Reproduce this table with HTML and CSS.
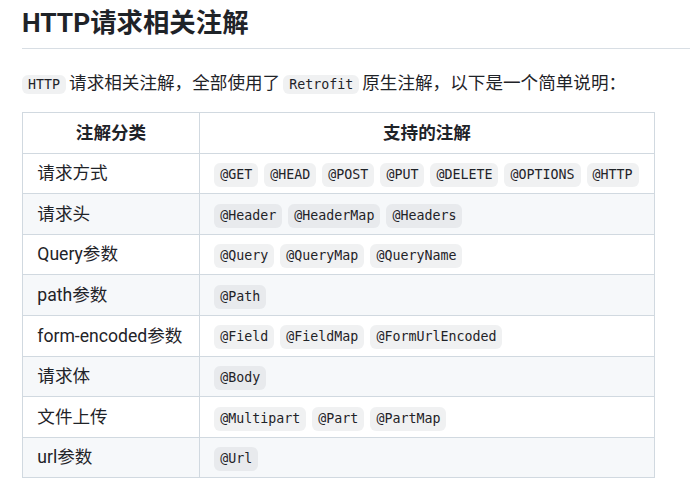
FILE: index.html
```html
<!DOCTYPE html>
<html lang="zh-CN">
<head>
<meta charset="utf-8">
<title>HTTP请求相关注解</title>
<link rel="stylesheet" href="styles.css">
</head>
<body>
<main class="doc">
  <h2 class="title">HTTP请求相关注解</h2>
  <p class="lead"><code class="chip">HTTP</code>请求相关注解，全部使用了<code class="chip">Retrofit</code>原生注解，以下是一个简单说明：</p>
  <table class="ann">
    <thead>
      <tr><th class="c1">注解分类</th><th class="c2">支持的注解</th></tr>
    </thead>
    <tbody>
      <tr><td>请求方式</td><td><div class="chips"><code class="chip">@GET</code><code class="chip">@HEAD</code><code class="chip">@POST</code><code class="chip">@PUT</code><code class="chip">@DELETE</code><code class="chip">@OPTIONS</code><code class="chip">@HTTP</code></div></td></tr>
      <tr><td>请求头</td><td><div class="chips"><code class="chip">@Header</code><code class="chip">@HeaderMap</code><code class="chip">@Headers</code></div></td></tr>
      <tr><td>Query参数</td><td><div class="chips"><code class="chip">@Query</code><code class="chip">@QueryMap</code><code class="chip">@QueryName</code></div></td></tr>
      <tr><td>path参数</td><td><div class="chips"><code class="chip">@Path</code></div></td></tr>
      <tr><td>form-encoded参数</td><td><div class="chips"><code class="chip">@Field</code><code class="chip">@FieldMap</code><code class="chip">@FormUrlEncoded</code></div></td></tr>
      <tr><td>请求体</td><td><div class="chips"><code class="chip">@Body</code></div></td></tr>
      <tr><td>文件上传</td><td><div class="chips"><code class="chip">@Multipart</code><code class="chip">@Part</code><code class="chip">@PartMap</code></div></td></tr>
      <tr><td>url参数</td><td><div class="chips"><code class="chip">@Url</code></div></td></tr>
    </tbody>
  </table>
</main>
</body>
</html>
```
FILE: styles.css
```css
html, body {
  margin: 0;
  padding: 0;
  background: #ffffff;
}
body {
  font-family: Roboto, "Noto Sans CJK SC", sans-serif;
  font-size: 17.6px;
  line-height: 26.4px;
  color: #1f2328;
}
.doc {
  padding: 0 0 0 22px;
}
.title {
  margin: 0 0 20.8px 0;
  padding: 7px 0 7.9px 0;
  font-size: 26.4px;
  line-height: 33px;
  font-weight: 700;
  border-bottom: 1px solid #d8dee4;
}
.lead {
  margin: 0 0 16px 0;
  line-height: 26.4px;
}
.lead .chip {
  margin-right: 3px;
}
.lead .chip + .chip {
  margin-left: 3px;
}
.chip {
  font-family: "DejaVu Sans Mono", monospace;
  font-size: 13.3px;
  line-height: 20px;
  padding: 2px 6px;
  border-radius: 6px;
  background: rgba(129, 139, 152, 0.12);
  white-space: nowrap;
}
.ann {
  border-collapse: collapse;
  border-spacing: 0;
}
.ann th, .ann td {
  border: 1px solid #d1d9e0;
  padding: 6.6px 14.3px;
  line-height: 26.4px;
  text-align: left;
}
.ann th {
  font-weight: 700;
  text-align: center;
}
.ann .c1 { width: 147.4px; }
.ann .c2 { width: 425.4px; }
.ann tbody tr:nth-child(2n) {
  background: #f6f8fa;
}
.chips {
  display: flex;
  flex-wrap: nowrap;
  gap: 6px;
  align-items: center;
  height: 26.4px;
  padding-top: 3px;
  box-sizing: border-box;
}
.chips .chip {
  display: inline-block;
  line-height: 20px;
}
```
